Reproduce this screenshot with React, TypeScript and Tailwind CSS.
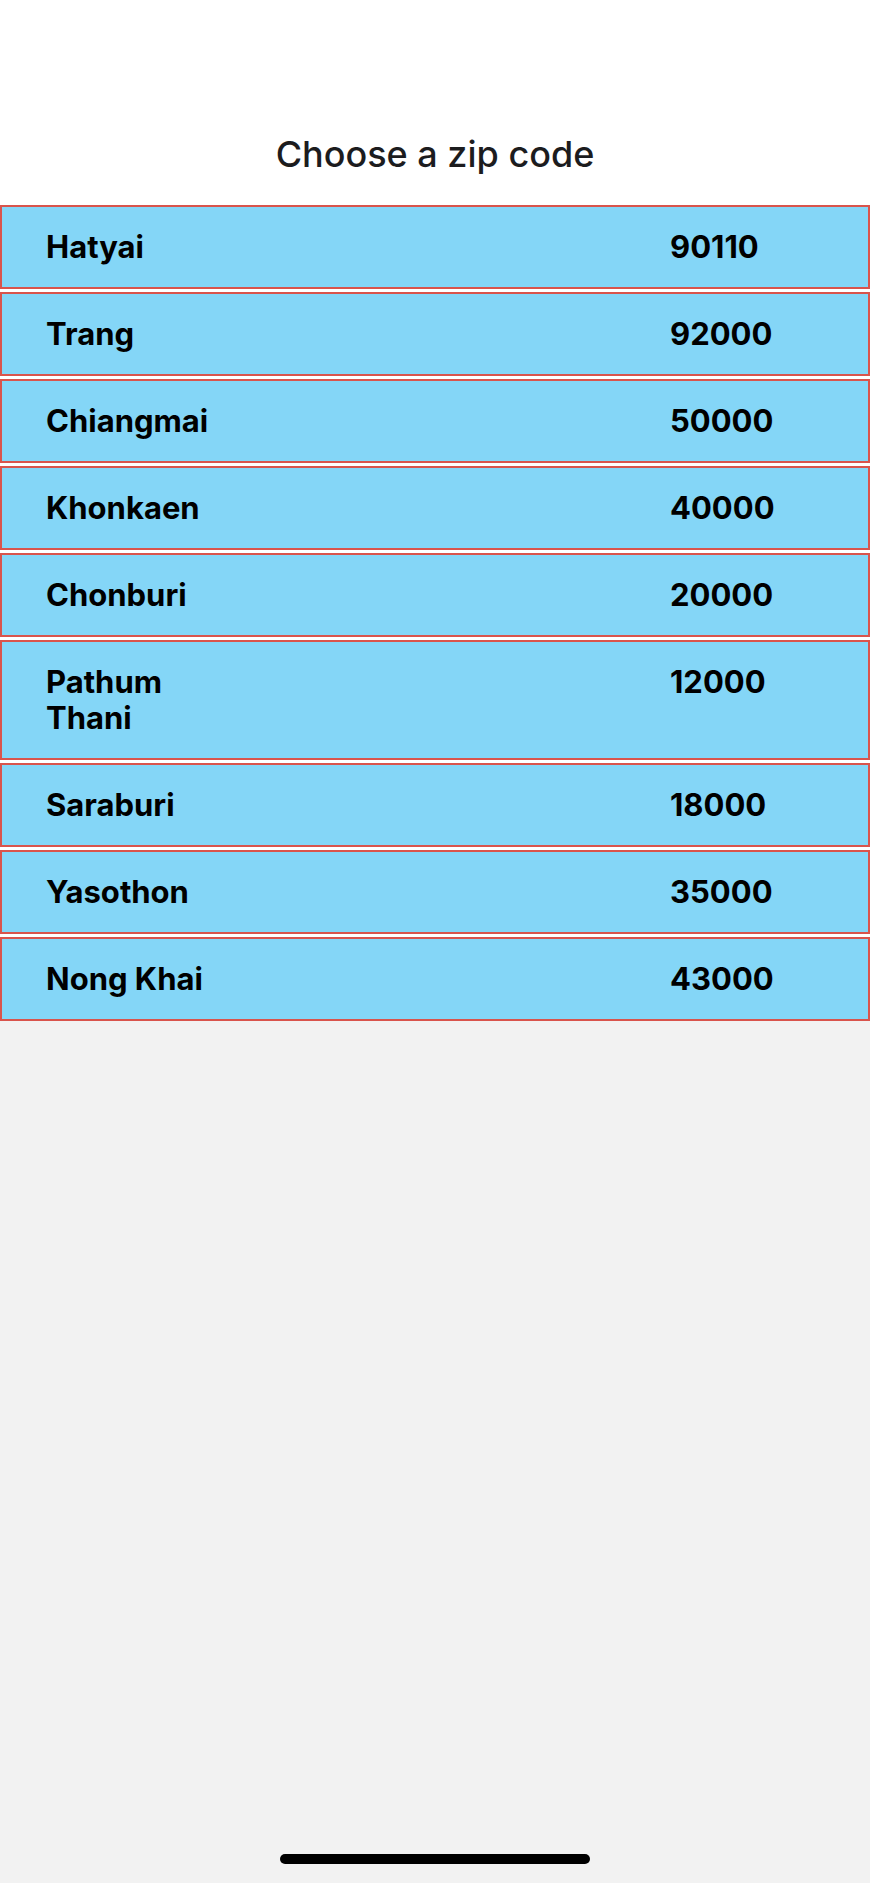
import React from 'react';

const zipCodes = [
  { name: 'Hatyai', zip: '90110' },
  { name: 'Trang', zip: '92000' },
  { name: 'Chiangmai', zip: '50000' },
  { name: 'Khonkaen', zip: '40000' },
  { name: 'Chonburi', zip: '20000' },
  { name: 'Pathum Thani', zip: '12000' },
  { name: 'Saraburi', zip: '18000' },
  { name: 'Yasothon', zip: '35000' },
  { name: 'Nong Khai', zip: '43000' },
];

const App: React.FC = () => {
  return (
    <div
      className="min-h-screen bg-[#f2f2f2] flex flex-col"
      style={{ fontFamily: 'Inter, "Noto Sans", sans-serif' }}
    >
      {/* Header */}
      <div className="bg-white pt-[136px] pb-[33px]">
        <h1 className="text-center text-[36px] leading-[36px] font-medium text-[#1c1c1e]">
          Choose a zip code
        </h1>
      </div>

      {/* List */}
      <div className="bg-white flex flex-col gap-[3px]">
        {zipCodes.map((item) => (
          <div
            key={item.zip}
            className="bg-[#84d6f7] border-2 border-[#d9544c] flex items-start justify-between pl-[44px] pr-[45px] py-[22px]"
          >
            <span className="w-[195px] text-[31px] leading-[36px] font-bold text-black">{item.name}</span>
            <span className="w-[153px] text-[31px] leading-[36px] font-bold text-black">{item.zip}</span>
          </div>
        ))}
      </div>

      <div className="flex-1" />

      {/* Home indicator */}
      <div className="flex justify-center pb-[19px]">
        <div className="w-[310px] h-[10px] rounded-full bg-black" />
      </div>
    </div>
  );
};

export default App;
